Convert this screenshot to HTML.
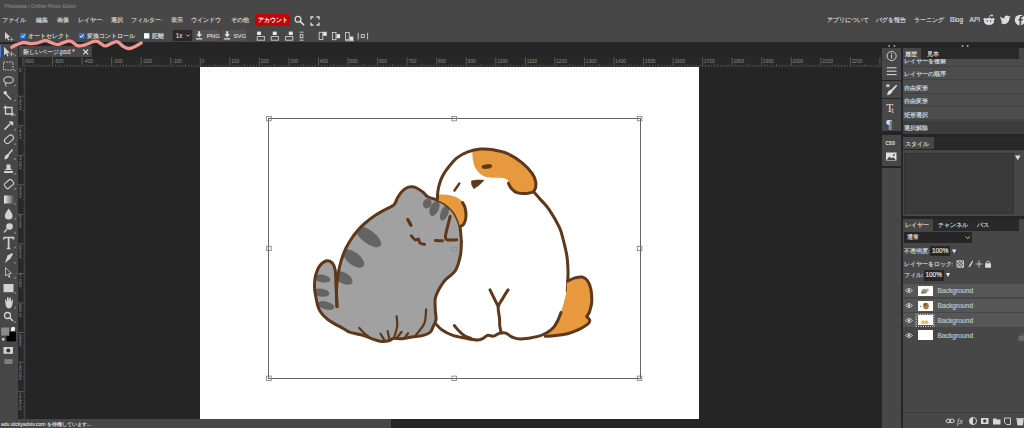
<!DOCTYPE html>
<html><head><meta charset="utf-8">
<style>
*{margin:0;padding:0;box-sizing:border-box}
html,body{width:1024px;height:428px;overflow:hidden;background:#474747;font-family:"Liberation Sans",sans-serif;color:#d8d8d8}
.a{position:absolute}
.t{position:absolute;white-space:nowrap;line-height:1;-webkit-text-stroke:0.18px currentColor}
.rt,.ln{-webkit-text-stroke:0.18px currentColor}
.m{font-size:6.4px;top:16.6px;color:#d2d2d2}
.row{position:absolute;left:902.5px;width:121.5px;background:#4c4c4c;border-bottom:1px solid #414141}
.rt{position:absolute;left:1.2px;top:4.4px;font-size:6.2px;color:#d6d6d6;white-space:nowrap;line-height:1}
.lay{position:absolute;left:902.5px;width:121.5px;height:14.8px;border-bottom:1px solid #474747}
.eye{position:absolute;left:2.5px;top:3.9px;width:8px;height:7px}
.eye svg{display:block}
.th{position:absolute;left:15px;top:2.2px;width:15px;height:10px;background:#fff}
.ln{position:absolute;left:35px;top:4.6px;font-size:6.7px;color:#c2c2c2;line-height:1;white-space:nowrap}
</style></head><body>
<!-- title -->
<div class="t" style="left:4.5px;top:3.6px;font-size:5.2px;color:#7a7a7a">Photopea | Online Photo Editor</div>
<!-- menu -->
<div class="t m" style="left:2px">ファイル</div>
<div class="t m" style="left:36px">編集</div>
<div class="t m" style="left:56.5px">画像</div>
<div class="t m" style="left:78px">レイヤー<span style="font-size:4px;color:#777">~</span></div>
<div class="t m" style="left:110.5px">選択</div>
<div class="t m" style="left:131px">フィルター<span style="font-size:4px;color:#777">~</span></div>
<div class="t m" style="left:170.5px">表示</div>
<div class="t m" style="left:191px">ウインドウ</div>
<div class="t m" style="left:231px">その他</div>
<div class="a" style="left:254.8px;top:14.4px;width:35.4px;height:12.1px;background:#c20606;border-radius:1.5px"></div>
<div class="t m" style="left:257.5px;color:#fff">アカウント</div>
<svg class="a" style="left:290px;top:12px" width="34" height="16" viewBox="290 12 34 16">
 <circle cx="298" cy="19.2" r="2.9" fill="none" stroke="#ddd" stroke-width="1.2"/>
 <path d="M300.2 21.4 L303.6 24.8" stroke="#ddd" stroke-width="1.6" stroke-linecap="round"/>
 <path d="M311 19.5V17H313.5 M316.5 17H319V19.5 M319 22.5V25H316.5 M313.5 25H311V22.5" fill="none" stroke="#ddd" stroke-width="1.3"/>
</svg>
<!-- right menu -->
<div class="t m" style="left:827px">アプリについて</div>
<div class="t m" style="left:876px">バグを報告</div>
<div class="t m" style="left:913.5px">ラーニング</div>
<div class="t" style="left:950px;top:17.2px;font-size:6.6px;color:#dcdcdc">Blog</div>
<div class="t" style="left:969.5px;top:17.2px;font-size:6.6px;color:#dcdcdc">API</div>
<svg class="a" style="left:980px;top:12px" width="44" height="16" viewBox="980 12 44 16">
 <g fill="#ddd">
  <ellipse cx="989" cy="21.5" rx="5" ry="3.6"/>
  <circle cx="984.8" cy="19.2" r="1.3"/><circle cx="993.2" cy="19.2" r="1.3"/>
  <circle cx="992" cy="15.6" r="1"/>
  <path d="M989 18.2 L990 15 L992 15.6" stroke="#ddd" stroke-width="0.6" fill="none"/>
 </g>
 <circle cx="987.3" cy="21" r="0.8" fill="#474747"/><circle cx="990.7" cy="21" r="0.8" fill="#474747"/>
 <path d="M1000.5 22.8 Q1003 24.8 1006 23.8 Q1009.5 22 1009.6 17.6 L1010.8 16.5 L1009.4 16.8 L1010 15.6 L1008.5 16.2 Q1007 14.9 1005.2 16 Q1004 17 1004.4 18.6 Q1001.8 18.5 1000.4 16.6 Q999.8 18.6 1001.6 20 L1000.7 19.8 Q1001 21.4 1002.6 21.9 Q1001.6 22.6 1000.5 22.8Z" fill="#ddd"/>
 <circle cx="1020" cy="20" r="5.2" fill="#ddd"/>
 <path d="M1021.2 25.2V20.6H1022.6L1022.8 19H1021.2V18Q1021.2 17.3 1022 17.3H1022.9V15.9Q1022.3 15.8 1021.6 15.8Q1019.6 15.8 1019.6 17.8V19H1018.3V20.6H1019.6V25.2Z" fill="#474747"/>
</svg>

<!-- options bar y28-42 -->
<svg class="a" style="left:0;top:27px" width="380" height="16" viewBox="0 27 380 16">
 <path d="M5 32 L5 39.5 L6.8 37.8 L8.2 40.5 L9.3 40 L8 37.3 L10.4 37.1Z" fill="#d0d0d0"/>
 <path d="M11.5 37.3V41.5 M9.5 39.4H13.5" stroke="#bbb" stroke-width="0.7"/>
 <rect x="20" y="33" width="6" height="5.8" rx="0.8" fill="#2f6fe0"/>
 <path d="M21.3 36 L22.6 37.4 L24.8 34.4" stroke="#fff" stroke-width="1" fill="none"/>
 <rect x="78.7" y="33" width="6" height="5.8" rx="0.8" fill="#2f6fe0"/>
 <path d="M80 36 L81.3 37.4 L83.5 34.4" stroke="#fff" stroke-width="1" fill="none"/>
 <rect x="144" y="33.2" width="5.4" height="5.4" fill="#fafafa"/>
 <rect x="172.8" y="29.9" width="19.1" height="11.2" fill="#2a2a2a"/>
 <rect x="194.3" y="29.9" width="24.9" height="11.2" fill="#525252"/>
 <rect x="222.1" y="29.9" width="23.9" height="11.2" fill="#525252"/>
 <path d="M186.3 34.6 L188 36.3 L189.7 34.6" stroke="#ccc" stroke-width="0.9" fill="none"/>
 <path d="M198.2 31.2H200.2V34.2H202L199.2 37.2L196.4 34.2H198.2Z M196.2 38.2H202.2V39.6H196.2Z" fill="#e4e4e4"/>
 <path d="M226.2 31.2H228.2V34.2H230L227.2 37.2L224.4 34.2H226.2Z M224.2 38.2H230.2V39.6H224.2Z" fill="#e4e4e4"/>
 <g fill="none" stroke="#cfcfcf" stroke-width="0.9">
  <rect x="257.2" y="36.6" width="7.2" height="3.6"/>
  <rect x="271.2" y="36.6" width="7.2" height="3.6"/>
  <rect x="285.6" y="36.6" width="7.2" height="3.6"/>
  <path d="M299.5 32.2H303.6 M299.5 40.2H303.6"/><rect x="300.2" y="34.6" width="2.7" height="3.2"/>
  <rect x="319.2" y="32.3" width="3.6" height="7.2"/>
  <rect x="332.4" y="32.5" width="3.6" height="7.2"/>
  <rect x="345.6" y="32.5" width="3.6" height="7.2"/>
  <path d="M345 40.8H353.8"/>
  <path d="M358.2 32.8V39.5 M367.6 32.8V39.5"/><rect x="361.3" y="34.6" width="3" height="3"/>
 </g>
 <g fill="#e6e6e6">
  <rect x="257" y="31.6" width="4" height="3.4"/><rect x="272.7" y="31.6" width="4" height="3.4"/><rect x="288.8" y="31.6" width="4" height="3.4"/>
  <rect x="323.2" y="31.8" width="3.5" height="4"/><rect x="336.6" y="34.2" width="3.5" height="4"/><rect x="349.8" y="36.5" width="3.5" height="4"/>
 </g>
</svg>
<div class="t" style="left:27.8px;top:32.6px;font-size:6.3px;color:#d2d2d2">オートセレクト</div>
<div class="t" style="left:86.5px;top:32.6px;font-size:6.3px;color:#d2d2d2">変換コントロール</div>
<div class="t" style="left:151.5px;top:32.6px;font-size:6.3px;color:#d8d8d8">距離</div>
<div class="t" style="left:175.8px;top:32.8px;font-size:6.3px;color:#d0d0d0">1x</div>
<div class="t" style="left:206.8px;top:33px;font-size:6.1px;color:#d0d0d0">PNG</div>
<div class="t" style="left:233.4px;top:33px;font-size:6.1px;color:#d0d0d0">SVG</div>

<!-- dark canvas area -->
<div class="a" style="left:0;top:42.2px;width:1024px;height:385.8px;background:#252525"></div>
<!-- left toolbar -->
<div class="a" style="left:0;top:43.5px;width:17.5px;height:375.5px;background:#474747"></div>
<div class="a" style="left:0;top:45px;width:1.4px;height:12.3px;background:#4f78d8"></div>
<svg class="a" style="left:0;top:43px" width="17.5" height="330" viewBox="0 43 17.5 330">
<path d="M13.6 56.2 L15.6 54.2 L15.6 56.2Z" fill="#9a9a9a"/>
<path d="M13.6 71.2 L15.6 69.2 L15.6 71.2Z" fill="#9a9a9a"/>
<path d="M13.6 86.2 L15.6 84.2 L15.6 86.2Z" fill="#9a9a9a"/>
<path d="M13.6 101.2 L15.6 99.2 L15.6 101.2Z" fill="#9a9a9a"/>
<path d="M13.6 115.7 L15.6 113.7 L15.6 115.7Z" fill="#9a9a9a"/>
<path d="M13.6 130.2 L15.6 128.2 L15.6 130.2Z" fill="#9a9a9a"/>
<path d="M13.6 144.7 L15.6 142.7 L15.6 144.7Z" fill="#9a9a9a"/>
<path d="M13.6 159.7 L15.6 157.7 L15.6 159.7Z" fill="#9a9a9a"/>
<path d="M13.6 174.5 L15.6 172.5 L15.6 174.5Z" fill="#9a9a9a"/>
<path d="M13.6 189.5 L15.6 187.5 L15.6 189.5Z" fill="#9a9a9a"/>
<path d="M13.6 204.5 L15.6 202.5 L15.6 204.5Z" fill="#9a9a9a"/>
<path d="M13.6 219.4 L15.6 217.4 L15.6 219.4Z" fill="#9a9a9a"/>
<path d="M13.6 233.4 L15.6 231.4 L15.6 233.4Z" fill="#9a9a9a"/>
<path d="M13.6 248.2 L15.6 246.2 L15.6 248.2Z" fill="#9a9a9a"/>
<path d="M13.6 263.6 L15.6 261.6 L15.6 263.6Z" fill="#9a9a9a"/>
<path d="M13.6 278.5 L15.6 276.5 L15.6 278.5Z" fill="#9a9a9a"/>
<path d="M13.6 293.5 L15.6 291.5 L15.6 293.5Z" fill="#9a9a9a"/>
<path d="M13.6 308.4 L15.6 306.4 L15.6 308.4Z" fill="#9a9a9a"/>
<path d="M13.6 322.7 L15.6 320.7 L15.6 322.7Z" fill="#9a9a9a"/>
<path d="M4 46.8 L4 55.5 L6 53.6 L7.4 56.6 L8.6 56 L7.3 53.1 L10 52.9Z" fill="#d2d2d2"/>
<path d="M11.5 51.5V56.5 M9 54H14" stroke="#bbb" stroke-width="0.8"/>
<rect x="3.5" y="62" width="9.5" height="8" fill="none" stroke="#d2d2d2" stroke-width="1" stroke-dasharray="1.5 1.2"/>
<ellipse cx="8.5" cy="80" rx="4.8" ry="3.3" fill="none" stroke="#d2d2d2" stroke-width="1.1"/>
<path d="M5.5 82.5 Q4.5 85 6.5 86.5" stroke="#d2d2d2" stroke-width="1" fill="none"/>
<path d="M5 93 L11 99.5" stroke="#d2d2d2" stroke-width="1.4"/><circle cx="5.2" cy="92.8" r="1.8" fill="#d2d2d2"/>
<path d="M5.5 105.5V114H14 M3.5 107.5H12V116" stroke="#d2d2d2" stroke-width="1.3" fill="none"/>
<path d="M4.5 129.5 L10 124 M9.5 121.5 L13 125" stroke="#d2d2d2" stroke-width="1.6" fill="none"/><circle cx="11.8" cy="122.8" r="1.6" fill="#d2d2d2"/>
<rect x="4" y="136.5" width="10" height="5.5" rx="2.7" transform="rotate(-40 9 139.3)" fill="none" stroke="#d2d2d2" stroke-width="1.1"/>
<path d="M12.5 149.5 L8 155" stroke="#d2d2d2" stroke-width="1.5"/><path d="M8 154 Q4 155 4.5 159.5 Q8.5 159 9 155.5Z" fill="#d2d2d2"/>
<path d="M6.5 164.5H10.5V168.5L12.5 170H4.5L6.5 168.5Z M4 171H13V173H4Z" fill="#d2d2d2"/>
<rect x="4.5" y="181" width="9" height="6" rx="1.5" transform="rotate(-40 9 184)" fill="none" stroke="#d2d2d2" stroke-width="1.1"/>
<defs><linearGradient id="gg"><stop offset="0" stop-color="#eee"/><stop offset="1" stop-color="#555"/></linearGradient></defs><rect x="4" y="195.5" width="9.5" height="8" fill="url(#gg)"/>
<path d="M8.7 208.5 Q4.5 214 4.8 216 Q5 219.5 8.7 219.5 Q12.4 219.5 12.6 216 Q12.8 214 8.7 208.5Z" fill="#d2d2d2"/>
<circle cx="9.5" cy="226.5" r="3.3" fill="#d2d2d2"/><path d="M7 229 L4 232.5" stroke="#d2d2d2" stroke-width="1.2"/>
<path d="M3.8 237.5H13.4V239.5 M8.6 237.5V248.5 M6.8 248.5H10.4 M3.8 237.5V239.5" stroke="#d2d2d2" stroke-width="1.7" fill="none"/>
<path d="M5 263 L7.5 255.5 L12 253 L13 254 L10.5 258.5Z" fill="#d2d2d2"/>
<path d="M5.5 267.5 L5.5 276 L7.5 274 L9 277.5 L10 277 L8.8 273.6 L11.3 273.4Z" fill="none" stroke="#d2d2d2" stroke-width="0.8"/>
<rect x="3.5" y="284" width="10" height="8.2" fill="#d2d2d2"/>
<path d="M5.5 304 L5 300 Q5 299 6 299.5 L7 302 L7 297.5 Q7.5 296.5 8.5 297.5 L9 301 L9.5 297.8 Q10.3 297 11 298 L11 302 L12 300 Q13 299.5 13 300.8 L12 306 Q11 308.5 8.5 308.5 Q6 308 5.5 304Z" fill="#d2d2d2"/>
<circle cx="7.5" cy="315.5" r="3" fill="none" stroke="#d2d2d2" stroke-width="1.3"/><path d="M9.8 317.8 L13 321" stroke="#d2d2d2" stroke-width="1.6"/>
<rect x="1" y="327.4" width="8.3" height="8.4" fill="#8a8a8a"/>
<rect x="6.5" y="332" width="9.4" height="9.4" fill="#000"/>
<rect x="1" y="327.4" width="8.3" height="8.4" fill="#8a8a8a" stroke="#333" stroke-width="0.3"/>
<path d="M11.5 327.5H14.5V330.5" stroke="#eee" stroke-width="1" fill="none"/><rect x="11" y="328" width="3.3" height="3" fill="#f0f0f0"/>
<rect x="2" y="338" width="2.5" height="2.5" fill="#ccc"/>
<rect x="3.5" y="347" width="9.5" height="6.8" fill="#d2d2d2"/><circle cx="8.25" cy="350.4" r="2" fill="#333"/>
<rect x="4.5" y="359" width="8" height="5" fill="#777"/><path d="M4.5 360.5H12.5 M4.5 362.5H12.5" stroke="#999" stroke-width="0.5"/>
</svg>
<!-- tab -->
<div class="a" style="left:19px;top:46.4px;width:73px;height:10.6px;background:#474747"></div>
<div class="t" style="left:22.5px;top:48.6px;font-size:6.3px;color:#d0d0d0">新しいページ.psd *</div>
<svg class="a" style="left:82px;top:48px" width="8" height="8" viewBox="82 48 8 8"><path d="M83.3 49.5L88.2 54.4M88.2 49.5L83.3 54.4" stroke="#ddd" stroke-width="1.1"/></svg>
<!-- rulers -->
<div class="a" style="left:17.5px;top:57px;width:864.5px;height:9.8px;background:#282828"></div>
<div class="a" style="left:17.5px;top:57px;width:7.5px;height:362px;background:#282828"></div>
<svg class="a" style="left:0;top:57px" width="882" height="362" viewBox="0 57 882 362">
<path d="M23.00 57.5V66.4 M25.96 65V66.4 M28.91 65V66.4 M31.87 65V66.4 M34.82 65V66.4 M37.78 64.2V66.4 M40.73 65V66.4 M43.69 65V66.4 M46.64 65V66.4 M49.60 65V66.4 M52.55 57.5V66.4 M55.51 65V66.4 M58.46 65V66.4 M61.42 65V66.4 M64.37 65V66.4 M67.33 64.2V66.4 M70.28 65V66.4 M73.24 65V66.4 M76.19 65V66.4 M79.15 65V66.4 M82.10 57.5V66.4 M85.06 65V66.4 M88.01 65V66.4 M90.97 65V66.4 M93.92 65V66.4 M96.88 64.2V66.4 M99.83 65V66.4 M102.79 65V66.4 M105.74 65V66.4 M108.70 65V66.4 M111.65 57.5V66.4 M114.61 65V66.4 M117.56 65V66.4 M120.52 65V66.4 M123.47 65V66.4 M126.43 64.2V66.4 M129.38 65V66.4 M132.34 65V66.4 M135.29 65V66.4 M138.25 65V66.4 M141.20 57.5V66.4 M144.16 65V66.4 M147.11 65V66.4 M150.06 65V66.4 M153.02 65V66.4 M155.98 64.2V66.4 M158.93 65V66.4 M161.89 65V66.4 M164.84 65V66.4 M167.80 65V66.4 M170.75 57.5V66.4 M173.71 65V66.4 M176.66 65V66.4 M179.62 65V66.4 M182.57 65V66.4 M185.53 64.2V66.4 M188.48 65V66.4 M191.44 65V66.4 M194.39 65V66.4 M197.34 65V66.4 M200.30 57.5V66.4 M203.26 65V66.4 M206.21 65V66.4 M209.17 65V66.4 M212.12 65V66.4 M215.08 64.2V66.4 M218.03 65V66.4 M220.99 65V66.4 M223.94 65V66.4 M226.90 65V66.4 M229.85 57.5V66.4 M232.81 65V66.4 M235.76 65V66.4 M238.72 65V66.4 M241.67 65V66.4 M244.62 64.2V66.4 M247.58 65V66.4 M250.54 65V66.4 M253.49 65V66.4 M256.44 65V66.4 M259.40 57.5V66.4 M262.36 65V66.4 M265.31 65V66.4 M268.26 65V66.4 M271.22 65V66.4 M274.18 64.2V66.4 M277.13 65V66.4 M280.09 65V66.4 M283.04 65V66.4 M286.00 65V66.4 M288.95 57.5V66.4 M291.90 65V66.4 M294.86 65V66.4 M297.81 65V66.4 M300.77 65V66.4 M303.73 64.2V66.4 M306.68 65V66.4 M309.63 65V66.4 M312.59 65V66.4 M315.55 65V66.4 M318.50 57.5V66.4 M321.45 65V66.4 M324.41 65V66.4 M327.37 65V66.4 M330.32 65V66.4 M333.27 64.2V66.4 M336.23 65V66.4 M339.19 65V66.4 M342.14 65V66.4 M345.10 65V66.4 M348.05 57.5V66.4 M351.00 65V66.4 M353.96 65V66.4 M356.91 65V66.4 M359.87 65V66.4 M362.83 64.2V66.4 M365.78 65V66.4 M368.74 65V66.4 M371.69 65V66.4 M374.64 65V66.4 M377.60 57.5V66.4 M380.56 65V66.4 M383.51 65V66.4 M386.47 65V66.4 M389.42 65V66.4 M392.38 64.2V66.4 M395.33 65V66.4 M398.28 65V66.4 M401.24 65V66.4 M404.19 65V66.4 M407.15 57.5V66.4 M410.11 65V66.4 M413.06 65V66.4 M416.01 65V66.4 M418.97 65V66.4 M421.93 64.2V66.4 M424.88 65V66.4 M427.84 65V66.4 M430.79 65V66.4 M433.75 65V66.4 M436.70 57.5V66.4 M439.65 65V66.4 M442.61 65V66.4 M445.56 65V66.4 M448.52 65V66.4 M451.48 64.2V66.4 M454.43 65V66.4 M457.38 65V66.4 M460.34 65V66.4 M463.30 65V66.4 M466.25 57.5V66.4 M469.20 65V66.4 M472.16 65V66.4 M475.12 65V66.4 M478.07 65V66.4 M481.02 64.2V66.4 M483.98 65V66.4 M486.94 65V66.4 M489.89 65V66.4 M492.84 65V66.4 M495.80 57.5V66.4 M498.75 65V66.4 M501.71 65V66.4 M504.67 65V66.4 M507.62 65V66.4 M510.57 64.2V66.4 M513.53 65V66.4 M516.49 65V66.4 M519.44 65V66.4 M522.39 65V66.4 M525.35 57.5V66.4 M528.31 65V66.4 M531.26 65V66.4 M534.21 65V66.4 M537.17 65V66.4 M540.12 64.2V66.4 M543.08 65V66.4 M546.03 65V66.4 M548.99 65V66.4 M551.94 65V66.4 M554.90 57.5V66.4 M557.86 65V66.4 M560.81 65V66.4 M563.76 65V66.4 M566.72 65V66.4 M569.67 64.2V66.4 M572.63 65V66.4 M575.59 65V66.4 M578.54 65V66.4 M581.50 65V66.4 M584.45 57.5V66.4 M587.40 65V66.4 M590.36 65V66.4 M593.32 65V66.4 M596.27 65V66.4 M599.22 64.2V66.4 M602.18 65V66.4 M605.13 65V66.4 M608.09 65V66.4 M611.05 65V66.4 M614.00 57.5V66.4 M616.95 65V66.4 M619.91 65V66.4 M622.87 65V66.4 M625.82 65V66.4 M628.77 64.2V66.4 M631.73 65V66.4 M634.68 65V66.4 M637.64 65V66.4 M640.60 65V66.4 M643.55 57.5V66.4 M646.50 65V66.4 M649.46 65V66.4 M652.41 65V66.4 M655.37 65V66.4 M658.33 64.2V66.4 M661.28 65V66.4 M664.24 65V66.4 M667.19 65V66.4 M670.14 65V66.4 M673.10 57.5V66.4 M676.06 65V66.4 M679.01 65V66.4 M681.96 65V66.4 M684.92 65V66.4 M687.88 64.2V66.4 M690.83 65V66.4 M693.78 65V66.4 M696.74 65V66.4 M699.69 65V66.4 M702.65 57.5V66.4 M705.61 65V66.4 M708.56 65V66.4 M711.51 65V66.4 M714.47 65V66.4 M717.42 64.2V66.4 M720.38 65V66.4 M723.34 65V66.4 M726.29 65V66.4 M729.24 65V66.4 M732.20 57.5V66.4 M735.15 65V66.4 M738.11 65V66.4 M741.07 65V66.4 M744.02 65V66.4 M746.97 64.2V66.4 M749.93 65V66.4 M752.88 65V66.4 M755.84 65V66.4 M758.80 65V66.4 M761.75 57.5V66.4 M764.70 65V66.4 M767.66 65V66.4 M770.62 65V66.4 M773.57 65V66.4 M776.53 64.2V66.4 M779.48 65V66.4 M782.43 65V66.4 M785.39 65V66.4 M788.35 65V66.4 M791.30 57.5V66.4 M794.25 65V66.4 M797.21 65V66.4 M800.16 65V66.4 M803.12 65V66.4 M806.08 64.2V66.4 M809.03 65V66.4 M811.98 65V66.4 M814.94 65V66.4 M817.89 65V66.4 M820.85 57.5V66.4 M823.81 65V66.4 M826.76 65V66.4 M829.71 65V66.4 M832.67 65V66.4 M835.62 64.2V66.4 M838.58 65V66.4 M841.54 65V66.4 M844.49 65V66.4 M847.44 65V66.4 M850.40 57.5V66.4 M853.36 65V66.4 M856.31 65V66.4 M859.26 65V66.4 M862.22 65V66.4 M865.17 64.2V66.4 M868.13 65V66.4 M871.09 65V66.4 M874.04 65V66.4 M876.99 65V66.4 M879.95 57.5V66.4" stroke="#8c8c8c" stroke-width="0.5"/>
<g font-family="Liberation Sans" font-size="4.8" fill="#8e8e8e"><text x="24.30" y="62.8">-600</text><text x="53.85" y="62.8">-500</text><text x="83.40" y="62.8">-400</text><text x="112.95" y="62.8">-300</text><text x="142.50" y="62.8">-200</text><text x="172.05" y="62.8">-100</text><text x="201.60" y="62.8">0</text><text x="231.15" y="62.8">100</text><text x="260.70" y="62.8">200</text><text x="290.25" y="62.8">300</text><text x="319.80" y="62.8">400</text><text x="349.35" y="62.8">500</text><text x="378.90" y="62.8">600</text><text x="408.45" y="62.8">700</text><text x="438.00" y="62.8">800</text><text x="467.55" y="62.8">900</text><text x="497.10" y="62.8">1000</text><text x="526.65" y="62.8">1100</text><text x="556.20" y="62.8">1200</text><text x="585.75" y="62.8">1300</text><text x="615.30" y="62.8">1400</text><text x="644.85" y="62.8">1500</text><text x="674.40" y="62.8">1600</text><text x="703.95" y="62.8">1700</text><text x="733.50" y="62.8">1800</text><text x="763.05" y="62.8">1900</text><text x="792.60" y="62.8">2000</text><text x="822.15" y="62.8">2100</text><text x="851.70" y="62.8">2200</text></g>
<path d="M23.6 69.55H25 M23.6 72.51H25 M23.6 75.46H25 M23.6 78.42H25 M22.8 81.38H25 M23.6 84.33H25 M23.6 87.28H25 M23.6 90.24H25 M23.6 93.19H25 M17.8 96.15H25 M23.6 99.10H25 M23.6 102.06H25 M23.6 105.01H25 M23.6 107.97H25 M22.8 110.92H25 M23.6 113.88H25 M23.6 116.83H25 M23.6 119.79H25 M23.6 122.74H25 M17.8 125.70H25 M23.6 128.66H25 M23.6 131.61H25 M23.6 134.56H25 M23.6 137.52H25 M22.8 140.47H25 M23.6 143.43H25 M23.6 146.38H25 M23.6 149.34H25 M23.6 152.29H25 M17.8 155.25H25 M23.6 158.20H25 M23.6 161.16H25 M23.6 164.12H25 M23.6 167.07H25 M22.8 170.02H25 M23.6 172.98H25 M23.6 175.94H25 M23.6 178.89H25 M23.6 181.84H25 M17.8 184.80H25 M23.6 187.75H25 M23.6 190.71H25 M23.6 193.66H25 M23.6 196.62H25 M22.8 199.57H25 M23.6 202.53H25 M23.6 205.48H25 M23.6 208.44H25 M23.6 211.39H25 M17.8 214.35H25 M23.6 217.30H25 M23.6 220.26H25 M23.6 223.21H25 M23.6 226.17H25 M22.8 229.12H25 M23.6 232.08H25 M23.6 235.03H25 M23.6 237.99H25 M23.6 240.94H25 M17.8 243.90H25 M23.6 246.85H25 M23.6 249.81H25 M23.6 252.76H25 M23.6 255.72H25 M22.8 258.67H25 M23.6 261.63H25 M23.6 264.58H25 M23.6 267.54H25 M23.6 270.50H25 M17.8 273.45H25 M23.6 276.40H25 M23.6 279.36H25 M23.6 282.31H25 M23.6 285.27H25 M22.8 288.23H25 M23.6 291.18H25 M23.6 294.13H25 M23.6 297.09H25 M23.6 300.04H25 M17.8 303.00H25 M23.6 305.95H25 M23.6 308.91H25 M23.6 311.87H25 M23.6 314.82H25 M22.8 317.77H25 M23.6 320.73H25 M23.6 323.68H25 M23.6 326.64H25 M23.6 329.60H25 M17.8 332.55H25 M23.6 335.50H25 M23.6 338.46H25 M23.6 341.41H25 M23.6 344.37H25 M22.8 347.32H25 M23.6 350.28H25 M23.6 353.24H25 M23.6 356.19H25 M23.6 359.14H25 M17.8 362.10H25 M23.6 365.05H25 M23.6 368.01H25 M23.6 370.97H25 M23.6 373.92H25 M22.8 376.88H25 M23.6 379.83H25 M23.6 382.78H25 M23.6 385.74H25 M23.6 388.69H25 M17.8 391.65H25 M23.6 394.61H25 M23.6 397.56H25 M23.6 400.51H25 M23.6 403.47H25 M22.8 406.42H25 M23.6 409.38H25 M23.6 412.33H25 M23.6 415.29H25 M23.6 418.25H25" stroke="#8c8c8c" stroke-width="0.5"/>
<g font-family="Liberation Sans" font-size="4.6" fill="#8e8e8e"><text x="19" y="71.60">0</text><text x="19" y="101.15">1</text><text x="19" y="105.45">0</text><text x="19" y="109.75">0</text><text x="19" y="130.70">2</text><text x="19" y="135.00">0</text><text x="19" y="139.30">0</text><text x="19" y="160.25">3</text><text x="19" y="164.55">0</text><text x="19" y="168.85">0</text><text x="19" y="189.80">4</text><text x="19" y="194.10">0</text><text x="19" y="198.40">0</text><text x="19" y="219.35">5</text><text x="19" y="223.65">0</text><text x="19" y="227.95">0</text><text x="19" y="248.90">6</text><text x="19" y="253.20">0</text><text x="19" y="257.50">0</text><text x="19" y="278.45">7</text><text x="19" y="282.75">0</text><text x="19" y="287.05">0</text><text x="19" y="308.00">8</text><text x="19" y="312.30">0</text><text x="19" y="316.60">0</text><text x="19" y="337.55">9</text><text x="19" y="341.85">0</text><text x="19" y="346.15">0</text><text x="19" y="367.10">1</text><text x="19" y="371.40">0</text><text x="19" y="375.70">0</text><text x="19" y="380.00">0</text><text x="19" y="396.65">1</text><text x="19" y="400.95">1</text><text x="19" y="405.25">0</text><text x="19" y="409.55">0</text></g>
<path d="M24.9 57V419" stroke="#4c4c4c" stroke-width="0.7"/>
<path d="M17.5 66.8H882" stroke="#3a3a3a" stroke-width="0.6"/>
</svg>
<!-- document -->
<div class="a" style="left:200.2px;top:67px;width:498.8px;height:352px;background:#fff"></div>
<svg class="a" style="left:200px;top:69px" width="499" height="4" viewBox="200 69 499 4"><path d="M202 71H698" stroke="#e2e2e2" stroke-width="0.8" stroke-dasharray="1 1.95"/></svg>
<!-- transform box -->
<div class="a" style="left:268px;top:117.7px;width:372.5px;height:261.5px;border:1.8px solid #646464"></div>
<svg class="a" style="left:0;top:0" width="1024" height="428" viewBox="0 0 1024 428"><defs><clipPath id="cc"><path d="M461.4 241.7 C461.5 246.4 461.4 250.6 460.4 255.4 C459.4 260.2 457.8 266.7 455.3 270.8 C452.8 274.9 447.9 276.9 445.2 280.0 C442.5 283.1 440.8 286.1 439.1 289.1 C437.5 292.1 435.9 294.7 435.3 298.2 C434.7 301.7 435.2 306.8 435.3 310.3 C435.4 313.9 436.4 316.7 436.0 319.5 C435.6 322.3 434.0 324.9 433.0 327.0 C432.0 329.1 431.8 331.0 430.0 332.4 C428.2 333.8 425.3 334.9 422.3 335.6 C419.3 336.4 415.4 336.4 412.0 336.9 C408.6 337.4 404.7 338.6 401.7 338.8 C398.7 339.0 396.1 337.9 394.0 338.2 C391.9 338.5 390.9 340.3 388.8 340.8 C386.7 341.3 383.9 341.7 381.1 341.4 C378.3 341.1 375.3 339.9 372.1 338.8 C368.9 337.7 365.5 336.1 361.9 335.0 C358.3 333.9 353.4 333.4 350.3 332.4 C347.2 331.3 347.3 330.8 343.6 328.7 C339.9 326.6 332.2 322.9 328.1 319.7 C324.0 316.5 321.2 313.7 319.1 309.4 C317.0 305.1 316.1 298.1 315.3 294.0 C314.5 289.9 314.4 288.1 314.5 285.0 C314.6 281.9 314.7 278.7 315.6 275.5 C316.5 272.3 317.9 268.1 319.8 265.7 C321.7 263.2 324.7 261.3 326.8 260.8 C328.9 260.3 331.0 261.4 332.4 262.9 C333.8 264.4 334.6 266.2 335.2 269.9 C335.8 273.6 335.8 281.6 336.0 285.0 C336.2 288.4 336.3 290.7 336.5 290.0 C336.7 289.3 336.8 284.8 337.3 281.0 C337.8 277.2 338.4 271.8 339.5 267.0 C340.6 262.2 342.3 256.8 344.0 252.5 C345.7 248.2 347.7 244.8 349.8 241.3 C351.9 237.8 354.2 234.6 356.8 231.5 C359.4 228.4 361.9 225.8 365.2 223.0 C368.5 220.2 373.0 216.9 376.5 214.6 C380.0 212.3 383.4 210.6 386.3 209.0 C389.2 207.4 392.1 206.7 394.0 204.8 C395.9 202.9 396.2 199.9 397.5 197.8 C398.8 195.7 400.0 193.6 401.5 192.0 C403.0 190.4 404.8 188.9 406.4 188.0 C408.0 187.1 409.5 186.9 411.0 186.8 C412.5 186.7 413.6 186.6 415.6 187.5 C417.6 188.4 421.0 190.5 423.0 192.1 C425.0 193.7 425.5 195.5 427.7 196.8 C429.9 198.1 433.3 198.4 436.3 199.7 C439.3 201.0 443.0 202.6 445.8 204.5 C448.6 206.4 451.2 209.0 453.1 211.3 C455.0 213.7 456.2 216.0 457.3 218.6 C458.4 221.2 459.3 223.2 460.0 227.0 C460.7 230.8 461.3 237.0 461.4 241.7Z"/></clipPath></defs>
<path d="M461.4 241.7 C461.5 246.4 461.4 250.6 460.4 255.4 C459.4 260.2 457.8 266.7 455.3 270.8 C452.8 274.9 447.9 276.9 445.2 280.0 C442.5 283.1 440.8 286.1 439.1 289.1 C437.5 292.1 435.9 294.7 435.3 298.2 C434.7 301.7 435.2 306.8 435.3 310.3 C435.4 313.9 436.4 316.7 436.0 319.5 C435.6 322.3 434.0 324.9 433.0 327.0 C432.0 329.1 431.8 331.0 430.0 332.4 C428.2 333.8 425.3 334.9 422.3 335.6 C419.3 336.4 415.4 336.4 412.0 336.9 C408.6 337.4 404.7 338.6 401.7 338.8 C398.7 339.0 396.1 337.9 394.0 338.2 C391.9 338.5 390.9 340.3 388.8 340.8 C386.7 341.3 383.9 341.7 381.1 341.4 C378.3 341.1 375.3 339.9 372.1 338.8 C368.9 337.7 365.5 336.1 361.9 335.0 C358.3 333.9 353.4 333.4 350.3 332.4 C347.2 331.3 347.3 330.8 343.6 328.7 C339.9 326.6 332.2 322.9 328.1 319.7 C324.0 316.5 321.2 313.7 319.1 309.4 C317.0 305.1 316.1 298.1 315.3 294.0 C314.5 289.9 314.4 288.1 314.5 285.0 C314.6 281.9 314.7 278.7 315.6 275.5 C316.5 272.3 317.9 268.1 319.8 265.7 C321.7 263.2 324.7 261.3 326.8 260.8 C328.9 260.3 331.0 261.4 332.4 262.9 C333.8 264.4 334.6 266.2 335.2 269.9 C335.8 273.6 335.8 281.6 336.0 285.0 C336.2 288.4 336.3 290.7 336.5 290.0 C336.7 289.3 336.8 284.8 337.3 281.0 C337.8 277.2 338.4 271.8 339.5 267.0 C340.6 262.2 342.3 256.8 344.0 252.5 C345.7 248.2 347.7 244.8 349.8 241.3 C351.9 237.8 354.2 234.6 356.8 231.5 C359.4 228.4 361.9 225.8 365.2 223.0 C368.5 220.2 373.0 216.9 376.5 214.6 C380.0 212.3 383.4 210.6 386.3 209.0 C389.2 207.4 392.1 206.7 394.0 204.8 C395.9 202.9 396.2 199.9 397.5 197.8 C398.8 195.7 400.0 193.6 401.5 192.0 C403.0 190.4 404.8 188.9 406.4 188.0 C408.0 187.1 409.5 186.9 411.0 186.8 C412.5 186.7 413.6 186.6 415.6 187.5 C417.6 188.4 421.0 190.5 423.0 192.1 C425.0 193.7 425.5 195.5 427.7 196.8 C429.9 198.1 433.3 198.4 436.3 199.7 C439.3 201.0 443.0 202.6 445.8 204.5 C448.6 206.4 451.2 209.0 453.1 211.3 C455.0 213.7 456.2 216.0 457.3 218.6 C458.4 221.2 459.3 223.2 460.0 227.0 C460.7 230.8 461.3 237.0 461.4 241.7Z" fill="#a1a1a1"/>
<g clip-path="url(#cc)">
<ellipse cx="368.5" cy="236.8" rx="15.0" ry="6.6" transform="rotate(37.0 368.5 236.8)" fill="#646464"/>
<ellipse cx="353.5" cy="258.5" rx="12.5" ry="6.3" transform="rotate(38.0 353.5 258.5)" fill="#646464"/>
<ellipse cx="343.5" cy="278.0" rx="10.0" ry="5.4" transform="rotate(30.0 343.5 278.0)" fill="#646464"/>
<ellipse cx="322.0" cy="278.5" rx="8.5" ry="3.8" transform="rotate(10.0 322.0 278.5)" fill="#646464"/>
<ellipse cx="321.5" cy="292.7" rx="8.0" ry="4.0" transform="rotate(8.0 321.5 292.7)" fill="#646464"/>
<ellipse cx="326.0" cy="305.5" rx="8.5" ry="4.0" transform="rotate(15.0 326.0 305.5)" fill="#646464"/>
<ellipse cx="427.3" cy="203.6" rx="4.3" ry="5.0" transform="rotate(25.0 427.3 203.6)" fill="#646464"/>
<ellipse cx="434.5" cy="208.5" rx="4.3" ry="8.0" transform="rotate(25.0 434.5 208.5)" fill="#646464"/>
<ellipse cx="444.5" cy="213.0" rx="3.8" ry="8.0" transform="rotate(22.0 444.5 213.0)" fill="#646464"/>
</g>
<path d="M461.4 241.7 C461.2 244.0 461.4 250.6 460.4 255.4 C459.4 260.2 457.8 266.7 455.3 270.8 C452.8 274.9 447.9 276.9 445.2 280.0 C442.5 283.1 440.8 286.1 439.1 289.1 C437.5 292.1 435.9 294.7 435.3 298.2 C434.7 301.7 435.2 306.8 435.3 310.3 C435.4 313.9 436.4 316.7 436.0 319.5 C435.6 322.3 434.0 324.9 433.0 327.0 C432.0 329.1 431.8 331.0 430.0 332.4 C428.2 333.8 425.3 334.9 422.3 335.6 C419.3 336.4 415.4 336.4 412.0 336.9 C408.6 337.4 404.7 338.6 401.7 338.8 C398.7 339.0 396.1 337.9 394.0 338.2 C391.9 338.5 390.9 340.3 388.8 340.8 C386.7 341.3 383.9 341.7 381.1 341.4 C378.3 341.1 375.3 339.9 372.1 338.8 C368.9 337.7 365.5 336.1 361.9 335.0 C358.3 333.9 353.4 333.4 350.3 332.4 C347.2 331.3 347.3 330.8 343.6 328.7 C339.9 326.6 332.2 322.9 328.1 319.7 C324.0 316.5 321.2 313.7 319.1 309.4 C317.0 305.1 316.1 298.1 315.3 294.0 C314.5 289.9 314.4 288.1 314.5 285.0 C314.6 281.9 314.7 278.7 315.6 275.5 C316.5 272.3 317.9 268.1 319.8 265.7 C321.7 263.2 324.7 261.3 326.8 260.8 C328.9 260.3 331.0 261.4 332.4 262.9 C333.8 264.4 334.6 266.2 335.2 269.9 C335.8 273.6 335.7 278.9 336.0 285.0 C336.3 291.1 336.8 303.2 337.0 306.8" fill="none" stroke="#5d381b" stroke-width="3.00" stroke-linecap="round" stroke-linejoin="round"/>
<path d="M337.0 306.8 C336.9 304.0 336.4 294.3 336.5 290.0 C336.6 285.7 336.8 284.8 337.3 281.0 C337.8 277.2 338.4 271.8 339.5 267.0 C340.6 262.2 342.3 256.8 344.0 252.5 C345.7 248.2 347.7 244.8 349.8 241.3 C351.9 237.8 354.2 234.6 356.8 231.5 C359.4 228.4 361.9 225.8 365.2 223.0 C368.5 220.2 373.0 216.9 376.5 214.6 C380.0 212.3 383.4 210.6 386.3 209.0 C389.2 207.4 392.1 206.7 394.0 204.8 C395.9 202.9 396.2 199.9 397.5 197.8 C398.8 195.7 400.0 193.6 401.5 192.0 C403.0 190.4 404.8 188.9 406.4 188.0 C408.0 187.1 409.5 186.9 411.0 186.8 C412.5 186.7 413.6 186.6 415.6 187.5 C417.6 188.4 421.0 190.5 423.0 192.1 C425.0 193.7 425.5 195.5 427.7 196.8 C429.9 198.1 433.3 198.4 436.3 199.7 C439.3 201.0 443.0 202.6 445.8 204.5 C448.6 206.4 451.2 209.0 453.1 211.3 C455.0 213.7 456.2 216.0 457.3 218.6 C458.4 221.2 459.3 223.2 460.0 227.0 C460.7 230.8 461.2 239.2 461.4 241.7" fill="none" stroke="#5d381b" stroke-width="3.00" stroke-linecap="round" stroke-linejoin="round"/>
<path d="M407.8 219.6 C408.3 220.6 410.4 224.4 410.9 225.3" fill="none" stroke="#5d381b" stroke-width="3.30" stroke-linecap="round" stroke-linejoin="round"/>
<path d="M411.3 235.8 C412.0 236.5 414.1 239.5 415.3 240.0 C416.5 240.5 417.6 238.4 418.4 238.9 C419.2 239.4 419.0 242.1 420.0 243.0 C421.0 243.9 423.8 244.2 424.6 244.4" fill="none" stroke="#5d381b" stroke-width="2.90" stroke-linecap="round" stroke-linejoin="round"/>
<path d="M435.5 240.5 C436.7 240.6 441.3 240.8 442.5 240.8" fill="none" stroke="#5d381b" stroke-width="3.00" stroke-linecap="round" stroke-linejoin="round"/>
<path d="M359.3 327.9 C360.1 328.8 362.5 331.6 364.0 333.0 C365.5 334.4 367.6 335.8 368.3 336.3" fill="none" stroke="#5d381b" stroke-width="2.20" stroke-linecap="round" stroke-linejoin="round"/>
<path d="M380.5 333.7 C381.1 334.8 383.7 339.0 384.3 340.1" fill="none" stroke="#5d381b" stroke-width="2.20" stroke-linecap="round" stroke-linejoin="round"/>
<path d="M387.6 331.1 C387.9 332.5 389.2 338.1 389.5 339.5" fill="none" stroke="#5d381b" stroke-width="2.20" stroke-linecap="round" stroke-linejoin="round"/>
<path d="M396.6 316.4 C396.7 318.0 397.6 322.4 397.2 326.0 C396.8 329.6 394.5 336.2 394.0 338.2" fill="none" stroke="#5d381b" stroke-width="2.20" stroke-linecap="round" stroke-linejoin="round"/>
<path d="M401.7 331.8 C400.9 332.8 397.9 336.6 397.2 337.6" fill="none" stroke="#5d381b" stroke-width="2.20" stroke-linecap="round" stroke-linejoin="round"/>
<path d="M408.1 333.1 C407.5 334.0 404.9 337.4 404.3 338.2" fill="none" stroke="#5d381b" stroke-width="2.20" stroke-linecap="round" stroke-linejoin="round"/>
<path d="M426.1 309.3 C425.9 311.4 425.8 318.7 424.8 322.1 C423.8 325.6 421.5 327.9 420.0 330.0 C418.5 332.1 416.5 334.2 415.8 335.0" fill="none" stroke="#5d381b" stroke-width="2.20" stroke-linecap="round" stroke-linejoin="round"/>
<path d="M438.0 194.8 C440.3 194.1 447.2 194.7 451.0 195.5 C454.8 196.3 458.4 198.3 460.5 199.7 C462.6 201.1 462.8 202.4 463.6 204.0 C464.4 205.6 465.0 207.1 465.4 209.2 C465.8 211.3 466.3 214.0 466.0 216.5 C465.7 219.0 464.8 222.3 463.8 224.0 C462.9 225.7 461.4 227.4 460.3 226.5 C459.2 225.6 458.5 221.1 457.3 218.6 C456.1 216.1 455.0 213.7 453.1 211.3 C451.2 209.0 448.4 206.5 445.8 204.5 C443.2 202.5 438.7 201.1 437.4 199.5 C436.1 197.9 435.7 195.5 438.0 194.8Z" fill="#e69a3d"/>
<path d="M462.5 202.5 C462.9 203.3 464.4 205.2 465.0 207.5 C465.6 209.8 466.2 213.8 466.0 216.5 C465.8 219.2 464.8 222.3 463.8 224.0 C462.9 225.7 460.9 226.1 460.3 226.5" fill="none" stroke="#5d381b" stroke-width="3.00" stroke-linecap="round" stroke-linejoin="round"/>
<path d="M472.8 151.0 C473.9 148.7 477.1 149.3 480.5 149.1 C483.9 148.9 488.3 149.0 493.0 149.8 C497.7 150.6 503.6 151.8 508.5 154.0 C513.4 156.2 518.5 159.8 522.5 163.1 C526.5 166.4 530.1 170.4 532.3 173.6 C534.5 176.8 535.4 179.2 535.8 182.0 C536.1 184.8 535.7 188.6 534.4 190.5 C533.1 192.4 531.0 193.0 528.1 193.3 C525.2 193.7 519.9 193.8 516.9 192.6 C513.9 191.4 511.5 188.4 509.9 186.3 C508.3 184.2 509.1 181.4 507.5 180.0 C505.9 178.6 503.6 178.3 500.0 177.8 C496.4 177.3 489.7 178.2 486.0 177.1 C482.3 176.0 479.9 173.8 477.8 171.5 C475.7 169.2 474.4 166.6 473.6 163.2 C472.8 159.8 471.7 153.3 472.8 151.0Z" fill="#e69a3d"/>
<path d="M437.4 199.5 C437.5 198.1 437.5 194.0 437.9 191.3 C438.3 188.6 438.8 186.1 439.6 183.5 C440.4 180.9 441.4 178.3 442.6 176.0 C443.8 173.7 444.5 172.4 446.8 169.4 C449.1 166.4 453.1 161.1 456.6 158.2 C460.1 155.3 463.8 153.4 467.8 151.9 C471.8 150.4 476.3 149.4 480.5 149.1 C484.7 148.8 488.3 149.0 493.0 149.8 C497.7 150.6 503.6 151.8 508.5 154.0 C513.4 156.2 518.5 159.8 522.5 163.1 C526.5 166.4 530.1 170.4 532.3 173.6 C534.5 176.8 535.4 179.2 535.8 182.0 C536.1 184.8 535.7 188.6 534.4 190.5 C533.1 192.4 531.0 193.0 528.1 193.3 C525.2 193.7 519.8 193.5 516.9 192.6 C514.0 191.7 512.4 189.5 511.0 188.0 C509.6 186.5 508.9 184.2 508.5 183.4" fill="none" stroke="#5d381b" stroke-width="3.00" stroke-linecap="round" stroke-linejoin="round"/>
<ellipse cx="486.9" cy="166.5" rx="5.3" ry="2.3" transform="rotate(-6.0 486.9 166.5)" fill="#5d381b"/>
<path d="M471.5 181 Q477 179.5 484 180.3 Q479 186 473.8 188.6 Q471 185 471.5 181Z" fill="#5d381b" stroke="#5d381b" stroke-width="0.8" stroke-linejoin="round"/>
<path d="M459.4 183.4 C458.6 184.6 455.3 189.3 454.5 190.5" fill="none" stroke="#5d381b" stroke-width="2.40" stroke-linecap="round" stroke-linejoin="round"/>
<path d="M450.1 216.4 C449.7 218.2 448.3 223.7 447.5 227.0 C446.7 230.3 445.6 233.9 445.5 236.0 C445.4 238.1 445.1 239.2 447.0 239.8 C448.9 240.4 455.1 239.8 456.7 239.8" fill="none" stroke="#5d381b" stroke-width="3.00" stroke-linecap="round" stroke-linejoin="round"/>
<path d="M533.7 191.9 C534.8 193.1 537.5 196.0 540.0 198.9 C542.5 201.8 545.8 204.7 549.0 209.4 C552.2 214.2 557.0 222.3 559.4 227.4 C561.8 232.5 562.1 235.3 563.3 240.0 C564.5 244.7 566.0 250.4 566.8 255.4 C567.6 260.4 567.8 265.7 568.0 270.0 C568.2 274.3 567.9 277.5 567.8 281.0 C567.7 284.5 567.3 289.3 567.2 291.0" fill="none" stroke="#5d381b" stroke-width="3.00" stroke-linecap="round" stroke-linejoin="round"/>
<path d="M567.6 281.0 C569.0 278.8 572.6 278.6 575.0 277.9 C577.4 277.2 580.0 276.6 582.1 277.0 C584.2 277.4 585.9 278.4 587.4 280.5 C588.9 282.6 590.2 285.8 590.9 289.3 C591.6 292.8 592.1 297.8 591.8 301.6 C591.5 305.4 589.8 309.5 589.1 312.1 C588.4 314.7 587.4 315.5 587.5 317.0 C587.6 318.5 589.5 319.8 589.5 321.0 C589.5 322.2 589.2 323.0 587.4 324.4 C585.6 325.8 582.1 328.0 578.6 329.6 C575.1 331.2 570.4 333.0 566.3 334.0 C562.2 335.0 557.5 335.4 554.0 335.8 C550.5 336.2 546.1 336.9 545.3 336.3 C544.5 335.7 547.2 334.3 549.0 332.3 C550.8 330.3 553.9 327.6 555.8 324.4 C557.7 321.2 559.1 316.7 560.5 313.0 C561.9 309.3 563.0 305.7 564.0 302.0 C565.0 298.3 565.9 294.5 566.5 291.0 C567.1 287.5 566.2 283.2 567.6 281.0Z" fill="#e69a3d"/>
<path d="M567.6 281.0 C568.8 280.5 572.6 278.6 575.0 277.9 C577.4 277.2 580.0 276.6 582.1 277.0 C584.2 277.4 585.9 278.4 587.4 280.5 C588.9 282.6 590.2 285.8 590.9 289.3 C591.6 292.8 592.0 297.9 591.8 301.6 C591.6 305.3 590.4 309.0 589.6 311.5 C588.8 314.0 587.3 315.7 586.8 316.5" fill="none" stroke="#5d381b" stroke-width="3.00" stroke-linecap="round" stroke-linejoin="round"/>
<path d="M586.8 316.5 C587.3 317.2 589.7 319.3 589.8 320.6 C589.9 321.9 589.3 322.9 587.4 324.4 C585.5 325.9 582.1 328.0 578.6 329.6 C575.1 331.2 570.4 333.0 566.3 334.0 C562.2 335.0 557.5 335.4 554.0 335.8 C550.5 336.2 546.8 336.2 545.3 336.3" fill="none" stroke="#5d381b" stroke-width="3.00" stroke-linecap="round" stroke-linejoin="round"/>
<path d="M561.0 312.5 C560.5 313.8 559.0 318.0 557.8 320.5 C556.5 323.0 555.3 325.5 553.5 327.5 C551.7 329.5 549.6 331.1 547.0 332.6 C544.4 334.1 542.4 335.3 538.0 336.4 C533.6 337.5 525.1 338.9 520.8 339.0 C516.5 339.1 514.5 338.0 512.0 337.0 C509.5 336.0 507.9 333.8 505.9 333.1 C503.9 332.5 501.8 332.6 499.8 333.1 C497.8 333.6 495.7 335.7 493.7 336.1 C491.7 336.5 489.5 335.0 487.7 335.4 C485.9 335.8 484.9 337.6 483.1 338.4 C481.3 339.2 479.8 340.0 477.0 340.0 C474.2 340.0 470.4 339.2 466.4 338.4 C462.4 337.6 456.9 336.8 452.8 335.4 C448.8 334.0 444.9 331.9 442.1 330.0 C439.3 328.1 437.0 325.0 436.0 324.0" fill="none" stroke="#5d381b" stroke-width="3.00" stroke-linecap="round" stroke-linejoin="round"/>
<path d="M454.3 325.5 C455.1 326.4 457.2 329.2 459.0 331.0 C460.8 332.8 462.9 334.9 464.9 336.1 C466.9 337.3 470.0 338.0 471.0 338.4" fill="none" stroke="#5d381b" stroke-width="3.00" stroke-linecap="round" stroke-linejoin="round"/>
<path d="M490.0 289.9 C490.7 291.2 492.6 295.2 494.0 298.0 C495.4 300.8 497.6 305.2 498.3 306.6" fill="none" stroke="#5d381b" stroke-width="3.00" stroke-linecap="round" stroke-linejoin="round"/>
<path d="M508.1 289.9 C507.2 291.2 504.6 295.2 503.0 298.0 C501.4 300.8 498.9 303.3 498.3 306.6 C497.7 309.9 499.2 314.8 499.5 318.0 C499.8 321.2 499.5 323.5 499.8 326.0 C500.1 328.5 501.1 331.9 501.3 333.1" fill="none" stroke="#5d381b" stroke-width="3.00" stroke-linecap="round" stroke-linejoin="round"/>
<path d="M11.8 47.3 C12.5 46.9 14.2 45.7 16.2 44.9 C18.2 44.1 21.3 42.7 23.7 42.5 C26.1 42.3 28.4 43.5 30.6 43.6 C32.8 43.7 34.2 43.7 36.7 43.2 C39.2 42.7 43.0 40.5 45.6 40.5 C48.2 40.5 50.2 42.6 52.4 43.2 C54.6 43.8 55.8 44.7 58.6 44.3 C61.5 43.9 66.3 40.6 69.5 40.8 C72.7 41.0 75.0 44.9 77.6 45.6 C80.1 46.3 81.8 45.5 84.8 44.8 C87.8 44.1 92.9 41.3 95.7 41.2 C98.5 41.1 99.8 43.3 101.5 44.1 C103.2 44.9 103.3 46.3 105.8 45.9 C108.3 45.5 113.7 41.5 116.6 41.6 C119.5 41.7 121.0 45.1 123.1 46.3 C125.1 47.4 126.7 48.6 128.9 48.5 C131.1 48.4 134.1 46.8 136.1 45.9 C138.1 45.0 140.3 43.5 141.2 43.0" fill="none" stroke="#f29595" stroke-width="3.3" stroke-linecap="round" stroke-linejoin="round"/></svg>
<svg class="a" style="left:250px;top:100px" width="410" height="300" viewBox="250 100 410 300">
<rect x="266.60" y="116.40" width="4.6" height="4.4" fill="none" stroke="#7a7a7a" stroke-width="0.8"/>
<rect x="451.95" y="116.40" width="4.6" height="4.4" fill="none" stroke="#7a7a7a" stroke-width="0.8"/>
<rect x="637.30" y="116.40" width="4.6" height="4.4" fill="none" stroke="#7a7a7a" stroke-width="0.8"/>
<rect x="266.60" y="246.25" width="4.6" height="4.4" fill="none" stroke="#7a7a7a" stroke-width="0.8"/>
<rect x="637.30" y="246.25" width="4.6" height="4.4" fill="none" stroke="#7a7a7a" stroke-width="0.8"/>
<rect x="266.60" y="376.10" width="4.6" height="4.4" fill="none" stroke="#7a7a7a" stroke-width="0.8"/>
<rect x="451.95" y="376.10" width="4.6" height="4.4" fill="none" stroke="#7a7a7a" stroke-width="0.8"/>
<rect x="637.30" y="376.10" width="4.6" height="4.4" fill="none" stroke="#7a7a7a" stroke-width="0.8"/>
<rect x="452.3" y="247.4" width="4.2" height="3.8" fill="none" stroke="#8a8a8a" stroke-width="0.7"/>
</svg>
<!-- status bar -->
<div class="a" style="left:0;top:418.8px;width:390.5px;height:9.2px;background:#474747"></div>
<div class="t" style="left:1px;top:422px;font-size:5px;color:#cfcfcf">ads.stickyadstv.com を待機しています...</div>

<!-- right icon column -->
<div class="a" style="left:882px;top:48.2px;width:18.8px;height:31.6px;background:#474747"></div>
<div class="a" style="left:882px;top:81.3px;width:18.8px;height:16.7px;background:#474747"></div>
<div class="a" style="left:882px;top:99.2px;width:18.8px;height:32.3px;background:#474747"></div>
<div class="a" style="left:882px;top:134.8px;width:18.8px;height:31px;background:#474747"></div>
<div class="a" style="left:882px;top:167.5px;width:18.8px;height:260.5px;background:#474747"></div>
<svg class="a" style="left:880px;top:40px" width="24" height="130" viewBox="880 40 24 130">
<path d="M889.6 44.8L887.8 46L889.6 47.2Z M893.8 44.8L895.6 46L893.8 47.2Z" fill="#c8c8c8"/>
<circle cx="891.6" cy="56" r="4.6" fill="none" stroke="#e0e0e0" stroke-width="0.85"/><path d="M891.6 54.6V58.6" stroke="#e0e0e0" stroke-width="0.9"/><circle cx="891.6" cy="53.4" r="0.55" fill="#e0e0e0"/>
<path d="M886.8 67.8H896.6 M886.8 71.2H896.6 M886.8 74.6H896.6" stroke="#e0e0e0" stroke-width="1"/>
<path d="M896.2 84.8 L897.2 85.8 L892.3 91.5 L890.8 90Z" fill="#e0e0e0"/><path d="M890.6 89.8 Q887.6 90.6 887.2 95.2 Q891.2 94.6 892.4 91.6Z" fill="#e0e0e0"/><rect x="886.3" y="84.3" width="3.2" height="2.8" fill="#c8c8c8"/>
<text x="886.2" y="111.6" font-family="Liberation Serif" font-size="11.5" fill="#e0e0e0">T</text><text x="891.4" y="113.2" font-family="Liberation Serif" font-size="7.6" fill="#e0e0e0">t</text>
<text x="886.3" y="128" font-family="Liberation Serif" font-size="12.5" fill="#e0e0e0">&#182;</text>
<text x="885.5" y="144.8" font-family="Liberation Sans" font-size="4.6" font-weight="bold" fill="#e0e0e0">CSS</text>
<rect x="886" y="152.5" width="10.5" height="8" fill="#e0e0e0"/><path d="M886.8 160 L889.5 156.5 L891.5 158.5 L893 157 L895.8 160Z" fill="#474747"/><circle cx="893.8" cy="155" r="0.9" fill="#474747"/>
</svg>
<svg class="a" style="left:958px;top:42px" width="14" height="7" viewBox="958 42 14 7"><path d="M961.8 44.8L963.8 46L961.8 47.2Z M968.3 44.8L966.3 46L968.3 47.2Z" fill="#c8c8c8"/></svg>
<!-- panels -->
<div class="a" style="left:902.5px;top:48.2px;width:121.5px;height:10.6px;background:#292929"></div>
<div class="a" style="left:902.5px;top:48.2px;width:18.6px;height:10.6px;background:#474747"></div>
<div class="a" style="left:1019px;top:48.2px;width:5px;height:10.6px;background:#474747"></div>
<div class="t" style="left:905px;top:50.8px;font-size:6.2px;color:#d6d6d6">履歴</div>
<div class="t" style="left:926.5px;top:50.8px;font-size:6.2px;color:#d6d6d6">見本</div>
<div class="a" style="left:902.5px;top:58.8px;width:121.5px;height:75.5px;background:#474747;overflow:hidden">
 <div class="row" style="left:0;top:-5.2px;height:13.1px"><div class="rt">レイヤーを複製</div></div>
 <div class="row" style="left:0;top:8.3px;height:13.2px"><div class="rt">レイヤーの順序</div></div>
 <div class="row" style="left:0;top:21.7px;height:13.2px"><div class="rt">自由変形</div></div>
 <div class="row" style="left:0;top:35.1px;height:13.2px"><div class="rt">自由変形</div></div>
 <div class="row" style="left:0;top:48.5px;height:13.2px"><div class="rt">矩形選択</div></div>
 <div class="row" style="left:0;top:61.9px;height:13.6px;background:#3d3d3d;border:none"><div class="rt">選択解除</div></div>
</div>

<div class="a" style="left:902.5px;top:137.2px;width:121.5px;height:12.3px;background:#292929"></div>
<div class="a" style="left:902.5px;top:137.2px;width:31px;height:12.3px;background:#474747"></div>
<div class="t" style="left:905px;top:140.6px;font-size:6.2px;color:#d6d6d6">スタイル</div>
<div class="a" style="left:902.5px;top:149.5px;width:121.5px;height:66.5px;background:#474747"></div>
<div class="a" style="left:904.4px;top:152.6px;width:109.3px;height:61px;background:#3a3a3a;border:0.6px solid #333"></div>
<svg class="a" style="left:1014px;top:154px" width="8" height="8" viewBox="1014 154 8 8"><path d="M1015 155.6H1020.6L1017.8 160.2Z" fill="#e0e0e0"/></svg>

<div class="a" style="left:902.5px;top:218.6px;width:121.5px;height:12.2px;background:#292929"></div>
<div class="a" style="left:902.5px;top:218.6px;width:30.3px;height:12.2px;background:#474747"></div>
<div class="a" style="left:1019px;top:218.6px;width:5px;height:12.2px;background:#474747"></div>
<div class="t" style="left:905px;top:222px;font-size:6.2px;color:#d6d6d6">レイヤー</div>
<div class="t" style="left:937.8px;top:222px;font-size:6.3px;color:#d6d6d6">チャンネル</div>
<div class="t" style="left:977.3px;top:222px;font-size:6.3px;color:#d6d6d6">パス</div>
<div class="a" style="left:902.5px;top:230.8px;width:121.5px;height:197.2px;background:#474747"></div>
<div class="a" style="left:903.5px;top:232.3px;width:68px;height:11.2px;background:#262626"></div>
<div class="t" style="left:907px;top:234.4px;font-size:6.3px;color:#d6d6d6">通常</div>
<svg class="a" style="left:964px;top:235px" width="8" height="6" viewBox="964 235 8 6"><path d="M965.5 236.5L967.7 238.6L969.9 236.5" stroke="#ccc" stroke-width="0.9" fill="none"/></svg>
<div class="t" style="left:903.5px;top:248.2px;font-size:6.2px;color:#d0d0d0">不透明度:</div>
<div class="a" style="left:930.2px;top:245.6px;width:19.6px;height:10.6px;background:#262626"></div>
<div class="t" style="left:932px;top:248px;font-size:6.4px;color:#e0e0e0">100%</div>
<div class="t" style="left:903.5px;top:261px;font-size:6.2px;color:#d0d0d0">レイヤーをロック:</div>
<div class="t" style="left:903.5px;top:272.2px;font-size:6.2px;color:#d0d0d0">フィル:</div>
<div class="a" style="left:923.8px;top:269.5px;width:20.4px;height:11.2px;background:#262626"></div>
<div class="t" style="left:925.5px;top:272px;font-size:6.4px;color:#e0e0e0">100%</div>
<svg class="a" style="left:946px;top:246px" width="80" height="36" viewBox="946 246 80 36">
 <path d="M952 249.5H956.3L954.15 253.4Z M945.8 273H950.1L947.95 276.9Z" fill="#e8e8e8"/>
 <g fill="#dcdcdc">
 <rect x="957" y="260.8" width="6.4" height="6.4" fill="none" stroke="#dcdcdc" stroke-width="0.8"/>
 <rect x="957.4" y="261.2" width="1.5" height="1.5"/><rect x="960.4" y="261.2" width="1.5" height="1.5"/>
 <rect x="958.9" y="262.7" width="1.5" height="1.5"/><rect x="961.9" y="262.7" width="1.5" height="1.5"/>
 <rect x="957.4" y="264.2" width="1.5" height="1.5"/><rect x="960.4" y="264.2" width="1.5" height="1.5"/>
 <rect x="958.9" y="265.7" width="1.5" height="1.5"/><rect x="961.9" y="265.7" width="1.5" height="1.5"/>
 <path d="M972.3 260.5 L969.5 265 L968.3 267.5 L970.7 266 L973.2 261Z"/>
 <path d="M979 260.5V267.5 M975.6 264H982.4" stroke="#dcdcdc" stroke-width="0.8"/>
 <rect x="985.2" y="263.3" width="5.8" height="4.4" rx="0.4"/>
 <path d="M986.3 263.5V262.3Q988.1 259.6 989.9 262.3V263.5" stroke="#dcdcdc" stroke-width="0.9" fill="none"/>
 </g>
</svg>
<!-- layer rows -->
<div class="lay" style="top:283.6px;background:#565656"><div class="eye"><svg width="8" height="7" viewBox="0 0 8 7"><path d="M0.5 3.5Q4 -0.5 7.5 3.5Q4 7.5 0.5 3.5Z" fill="none" stroke="#ddd" stroke-width="0.8"/><circle cx="4" cy="3.5" r="1.2" fill="#ddd"/></svg></div><div class="th"></div><div class="ln">Background</div></div>
<div class="lay" style="top:298.5px;background:#565656"><div class="eye"><svg width="8" height="7" viewBox="0 0 8 7"><path d="M0.5 3.5Q4 -0.5 7.5 3.5Q4 7.5 0.5 3.5Z" fill="none" stroke="#ddd" stroke-width="0.8"/><circle cx="4" cy="3.5" r="1.2" fill="#ddd"/></svg></div><div class="th"></div><div class="ln">Background</div></div>
<div class="lay" style="top:313.3px;background:#565656"><div class="eye"><svg width="8" height="7" viewBox="0 0 8 7"><path d="M0.5 3.5Q4 -0.5 7.5 3.5Q4 7.5 0.5 3.5Z" fill="none" stroke="#ddd" stroke-width="0.8"/><circle cx="4" cy="3.5" r="1.2" fill="#ddd"/></svg></div><div class="th"></div><div class="ln">Background</div></div>
<div class="lay" style="top:328.2px;border:none"><div class="eye"><svg width="8" height="7" viewBox="0 0 8 7"><path d="M0.5 3.5Q4 -0.5 7.5 3.5Q4 7.5 0.5 3.5Z" fill="none" stroke="#ddd" stroke-width="0.8"/><circle cx="4" cy="3.5" r="1.2" fill="#ddd"/></svg></div><div class="th"></div><div class="ln">Background</div></div>
<svg class="a" style="left:914px;top:282px" width="22" height="48" viewBox="914 282 22 48">
<rect x="916.2" y="314.3" width="17.6" height="12.2" fill="none" stroke="#eee" stroke-width="1"/>
<rect x="916.2" y="314.3" width="17.6" height="12.2" fill="none" stroke="#222" stroke-width="1" stroke-dasharray="1.2 1.2"/>
<ellipse cx="924.5" cy="291.2" rx="2.8" ry="2.3" fill="#8f8a86"/><ellipse cx="927.2" cy="290" rx="1.6" ry="1.5" fill="#d9a060"/><ellipse cx="922.5" cy="292.8" rx="1.5" ry="1" fill="#6d6a68"/>
<ellipse cx="926" cy="306" rx="2.8" ry="3.2" fill="#b0773a"/><ellipse cx="925" cy="304.5" rx="1.5" ry="1.6" fill="#8a5425"/><circle cx="920.8" cy="306.3" r="0.6" fill="#444"/>
<ellipse cx="923" cy="321.8" rx="1.8" ry="1.6" fill="#e2c45a"/><ellipse cx="926.5" cy="321.8" rx="1.8" ry="1.6" fill="#e2c45a"/><path d="M920.5 323.2H929" stroke="#c9a848" stroke-width="0.7"/>
</svg>
<svg class="a" style="left:1016.5px;top:332px" width="10" height="10" viewBox="1014 332 10 10"><rect x="1015.5" y="336" width="6.5" height="4.8" fill="#6a6a6a"/><path d="M1016.8 336.2V335Q1018.75 332 1020.7 335V336.2" stroke="#6a6a6a" stroke-width="1" fill="none"/></svg>
<!-- layers footer -->
<div class="a" style="left:902.5px;top:412.2px;width:121.5px;height:1px;background:#3a3a3a"></div>
<svg class="a" style="left:940px;top:412px" width="84" height="16" viewBox="940 412 84 16">
<rect x="946.2" y="419.2" width="4.6" height="3.4" rx="1.7" fill="none" stroke="#d8d8d8" stroke-width="1"/><rect x="949.6" y="419.2" width="4.6" height="3.4" rx="1.7" fill="none" stroke="#d8d8d8" stroke-width="1"/>
<text x="957" y="424" font-family="Liberation Serif" font-style="italic" font-size="8" fill="#d8d8d8">fx</text>
<circle cx="973" cy="421" r="3.6" fill="none" stroke="#d8d8d8" stroke-width="0.9"/><path d="M973 417.4 A3.6 3.6 0 0 0 973 424.6Z" fill="#d8d8d8"/>
<rect x="981" y="418" width="7.5" height="6" fill="#d8d8d8"/><circle cx="984.75" cy="421" r="1.7" fill="#474747"/>
<path d="M993 418.5H996L997 419.5H1000.5V424.5H993Z" fill="#d8d8d8"/>
<path d="M1004.5 418H1010.5V424.5H1006.5L1004.5 422.5Z" fill="none" stroke="#d8d8d8" stroke-width="0.9"/>
<path d="M1016 418.5H1024 M1017 419.5L1017.8 425H1022.5L1023.2 419.5Z" fill="#d8d8d8" stroke="#d8d8d8" stroke-width="0.8"/>
</svg>
</body></html>
